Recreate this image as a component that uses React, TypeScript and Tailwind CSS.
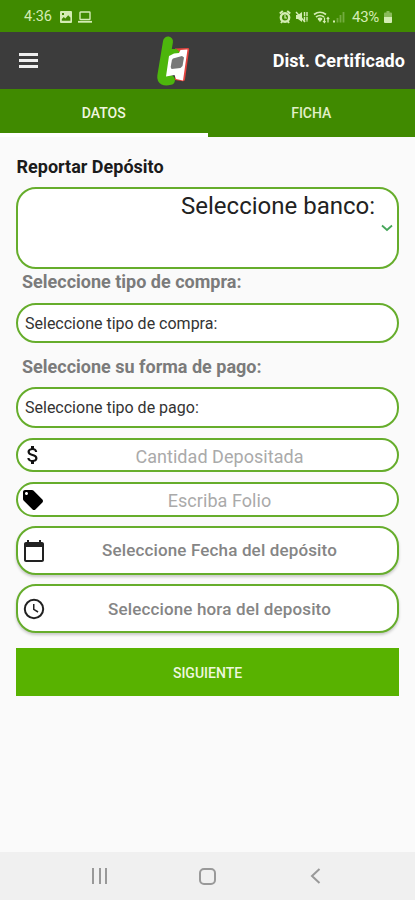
import React from 'react';

const field = 'w-full shrink-0 rounded-[20px] border-2 border-[#66ad2c] bg-white flex';

function StatusBar() {
  return (
    <div className="flex h-8 shrink-0 items-center bg-[#408a00] pt-[2px] text-[#d4ecb4]">
      <span className="ml-[24px] w-[36px] whitespace-nowrap text-[14.5px] leading-none">4:36</span>
      <svg className="h-[12px] w-[12px]" viewBox="0 0 12 12">
        <path fill="currentColor" fillRule="evenodd" d="M1 0h10q1 0 1 1v10q0 1-1 1H1q-1 0-1-1V1q0-1 1-1Zm.8 9.8h8.6V6.4L8.2 4.2 5.3 7.4 3.8 6 1.8 8ZM2 2v2h2V2Z" />
      </svg>
      <svg className="ml-[6px] h-[12px] w-[14px]" viewBox="0 0 14 12" fill="none" stroke="currentColor" strokeWidth="1.4">
        <rect x="2" y="1" width="10" height="7.5" rx=".6" />
        <path d="M0 10.8h14" strokeWidth="1.8" />
      </svg>
      <svg className="ml-[187px] h-[14px] w-[68px]" viewBox="0 0 68 14" fill="none" stroke="currentColor">
        <circle cx="6" cy="7.5" r="4.2" strokeWidth="2.4" />
        <path d="M.8 3.500l3-2.500M11.200 3.500l-3-2.500M2 13l1.500-2M10 13l-1.500-2" strokeWidth="2" />
        <path d="M6 5v3h2" strokeWidth="1.200" />
        <path d="M17 5h2l4-3v10l-4-3h-2Z" fill="currentColor" stroke="none" />
        <path d="m17 2 9 10" strokeWidth="1.400" />
        <path d="M25.500 2v10M28 2v10" strokeWidth="1.400" strokeDasharray="4 .8" />
        <path d="M35 4.500q6-4.500 12 0M37 7q4-3 8 0M39 9q2-1.500 4 0" strokeWidth="1.700" />
        <path d="m39 9 2 2.500L43 9Z" fill="currentColor" />
        <path d="M45.500 7.500v5m-1.500-1.500 1.500 1.500 1-1.500M49 12.500v-5m-1.200 1.500L49 7.500l1.200 1.500" strokeWidth="1.200" />
        <path d="M55 12.500v-2" strokeWidth="2" />
        <path d="M58.500 12.500V8M61.500 12.500V5M64.500 12.500V2" strokeWidth="1.800" opacity=".35" />
      </svg>
      <span className="ml-[5px] w-[32px] whitespace-nowrap text-[15px] leading-none tracking-[-0.3px]">43%</span>
      <svg className="h-[12px] w-[8px]" viewBox="0 0 8 12" fill="currentColor">
        <path d="M2.500 0h3v1.500H7q1 0 1 1V6H0V2.500q0-1 1-1h1.500Z" opacity=".5" />
        <path d="M0 6h8v5q0 1-1 1H1q-1 0-1-1Z" />
      </svg>
    </div>
  );
}

function Header() {
  return (
    <header className="flex h-[57px] shrink-0 items-center bg-[#3c3c3c] text-white">
      <div className="ml-[19px] flex w-[19px] flex-col gap-[3px]">
        <div className="h-[3px] bg-[#eeeeee]" />
        <div className="h-[3px] bg-[#eeeeee]" />
        <div className="h-[3px] bg-[#eeeeee]" />
      </div>
      <svg className="ml-[118px] h-[52px] w-[36px]" viewBox="0 0 36 52">
        <path d="m19 13.500 13-.5q1.500 0 1.200 1.500L29 44.500q-.3 1.800-2 1.700L19 45Z" fill="#e3443f" />
        <path d="M12 6.500 6.300 41q-.8 6 7.700 4" fill="none" stroke="#4db60c" strokeWidth="10" strokeLinecap="round" strokeLinejoin="round" />
        <path d="M14 14h6.500l3.500 3-3 4-8-1Z" fill="#4db60c" />
        <path d="m13 21 5-2.500 5-.5 1.500-3 7-.5-4.500 31-7-1.500-1.500-4-8.500 1.500Z" fill="#fff" />
        <path d="m17 23.500 9-2.500 2 1.500-1.500 8.500-2 2-9 1-.8-2 1.200-7Z" fill="#777" />
      </svg>
      <span className="ml-auto mr-[10px] whitespace-nowrap text-[18px] font-bold tracking-[0.05px]">Dist. Certificado</span>
    </header>
  );
}

function Tabs() {
  return (
    <div className="grid h-[48px] shrink-0 grid-cols-2 bg-[#408a00] text-center text-[14px] font-medium leading-[49px]">
      <div className="h-[48px] border-b-4 border-white text-[#eff6df]">DATOS</div>
      <div className="text-[#e0efc8]">FICHA</div>
    </div>
  );
}

export default function App() {
  return (
    <div className="flex h-[900px] w-full flex-col overflow-hidden bg-[#fafafa] font-['Roboto',sans-serif] text-[#222]">
      <StatusBar />
      <Header />
      <Tabs />
      <main className="flex min-h-0 flex-1 flex-col px-4 pt-[18px]">
        <h1 className="h-[32px] shrink-0 pl-[0.5px] text-[18px] font-bold leading-[24px] text-[#1b1b1b]">Reportar Depósito</h1>
        <div className={`${field} h-[82px] justify-end`}>
          <span className="text-[24px] leading-[34px]">Seleccione banco:</span>
          <svg className="ml-[6px] mr-[4px] mt-[35px] h-[8px] w-[12px]" viewBox="0 0 12 8" fill="none" stroke="#46a65a" strokeWidth="1.8">
            <path d="m1 1.500 5 4.500 5-4.500" />
          </svg>
        </div>
        <label className="h-[34px] shrink-0 pl-[6px] text-[18px] font-bold leading-[26px] text-[#7b7b7b]">Seleccione tipo de compra:</label>
        <div className={`${field} h-[40px] items-center pl-[7px] pt-[2px] text-[16px] text-[#333]`}>Seleccione tipo de compra:</div>
        <label className="h-[44px] shrink-0 pl-[6px] text-[18px] font-bold leading-[47px] text-[#7b7b7b]">Seleccione su forma de pago:</label>
        <div className={`${field} h-[41px] items-center pl-[7px] pt-[1px] text-[16px] text-[#333]`}>Seleccione tipo de pago:</div>
        <div className={`${field} mt-[10px] h-[34px] items-center pl-[3px] text-[#aaa]`}>
          <svg className="h-[24px] w-[24px] text-[#111]" viewBox="0 0 24 24" fill="currentColor">
            <path d="M11.800 10.900c-2.270-.59-3-1.200-3-2.150 0-1.090 1.010-1.850 2.700-1.850 1.780 0 2.440.85 2.500 2.100h2.210c-.07-1.720-1.120-3.300-3.210-3.810V3h-3v2.160c-1.940.42-3.500 1.680-3.500 3.610 0 2.310 1.910 3.460 4.700 4.130 2.500.6 3 1.480 3 2.410 0 .69-.49 1.790-2.700 1.790-2.060 0-2.870-.92-2.980-2.100h-2.200c.12 2.190 1.760 3.420 3.680 3.830V21h3v-2.150c1.950-.37 3.500-1.500 3.500-3.550 0-2.840-2.430-3.810-4.700-4.400z" />
          </svg>
          <span className="flex-1 pr-[3px] pt-[2px] text-center text-[18px] tracking-[0.05px]">Cantidad Depositada</span>
        </div>
        <div className={`${field} mt-[10px] h-[35px] items-center pl-[3px] text-[#aaa]`}>
          <svg className="h-[24px] w-[24px] text-black" viewBox="0 0 24 24" fill="currentColor">
            <path d="M21.410 11.580l-9-9C12.050 2.220 11.550 2 11 2H4c-1.100 0-2 .9-2 2v7c0 .55.22 1.050.59 1.420l9 9c.36.36.86.58 1.410.58s1.050-.22 1.410-.59l7-7c.37-.36.59-.86.59-1.410s-.23-1.060-.59-1.420zM5.500 7C4.670 7 4 6.330 4 5.500S4.670 4 5.500 4 7 4.670 7 5.500 6.330 7 5.500 7z" />
          </svg>
          <span className="flex-1 pr-[3px] pt-[2px] text-center text-[18px] tracking-[0.05px]">Escriba Folio</span>
        </div>
        <div className={`${field} mt-[9px] h-[49px] items-center pl-[4px] text-[#858585] shadow-[0_2px_3px_rgba(0,0,0,0.2)]`}>
          <svg className="h-[24px] w-[24px] text-[#222]" viewBox="0 0 24 24" fill="currentColor">
            <path d="M20 3h-1V1h-2v2H7V1H5v2H4c-1.100 0-2 .9-2 2v16c0 1.100.9 2 2 2h16c1.100 0 2-.9 2-2V5c0-1.100-.9-2-2-2zm0 18H4V8h16v13z" />
          </svg>
          <span className="flex-1 pr-[4px] pt-[1px] text-center text-[17px] font-medium tracking-[0.15px]">Seleccione Fecha del depósito</span>
        </div>
        <div className={`${field} mt-[9px] h-[49px] items-center pl-[4px] text-[#858585] shadow-[0_2px_3px_rgba(0,0,0,0.2)]`}>
          <svg className="h-[24px] w-[24px] text-[#222]" viewBox="0 0 24 24" fill="none" stroke="currentColor" strokeWidth="2">
            <circle cx="12" cy="12" r="9.2" />
            <path d="M11.750 7v5.400l4.300 2.600" strokeWidth="1.500" />
          </svg>
          <span className="flex-1 pr-[4px] pt-[2px] text-center text-[17px] font-medium tracking-[0.15px]">Seleccione hora del deposito</span>
        </div>
        <button className="mt-[15px] h-[48px] w-full shrink-0 bg-[#58b200] pt-[2px] text-[14px] font-medium text-[#edf7df]">SIGUIENTE</button>
      </main>
      <nav className="flex h-[48px] shrink-0 items-center bg-[#f0f0f0] text-[#999]">
        <div className="ml-[92px] flex h-[16px] w-[15px] justify-between">
          <div className="w-[2px] bg-[#999]" />
          <div className="w-[2px] bg-[#999]" />
          <div className="w-[2px] bg-[#999]" />
        </div>
        <div className="ml-[92px] h-[17px] w-[17px] rounded-[5px] border-2 border-[#999]" />
        <svg className="ml-[94px] h-[16px] w-[11px]" viewBox="0 0 11 16" fill="none" stroke="currentColor" strokeWidth="2">
          <path d="M9.500 1 2 8l7.500 7" />
        </svg>
      </nav>
    </div>
  );
}
